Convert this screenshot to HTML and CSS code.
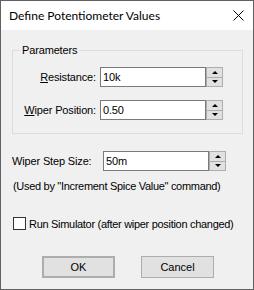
FILE: index.html
```html
<!DOCTYPE html>
<html>
<head>
  <meta charset="utf-8">
  <link rel="stylesheet" href="styles.css">
</head>
<body>
  <div class="dialog">
    <div class="titlebar">
      <span class="title">Define Potentiometer Values</span>
      <svg class="close" width="11" height="11" viewBox="0 0 11 11">
        <path d="M0.5 0.5 L10.5 10.5 M10.5 0.5 L0.5 10.5" stroke="#000" stroke-width="1" fill="none"/>
      </svg>
    </div>

    <div class="content">
      <fieldset class="group">
        <legend>Parameters</legend>
        <div class="row">
          <span class="label"><u>R</u>esistance:</span>
          <div class="spin">
            <span class="field">10k</span>
            <span class="arrows"><span class="up"></span><span class="down"></span></span>
          </div>
        </div>
        <div class="row">
          <span class="label"><u>W</u>iper Position:</span>
          <div class="spin">
            <span class="field">0.50</span>
            <span class="arrows"><span class="up"></span><span class="down"></span></span>
          </div>
        </div>
      </fieldset>

      <div class="row step">
        <span class="label left">Wiper Step Size:</span>
        <div class="spin">
          <span class="field">50m</span>
          <span class="arrows"><span class="up"></span><span class="down"></span></span>
        </div>
      </div>
      <p class="note">(Used by "Increment Spice Value" command)</p>

      <label class="check"><span class="box"></span>Run Simulator (after wiper position changed)</label>

      <div class="buttons">
        <button class="btn default">OK</button>
        <button class="btn">Cancel</button>
      </div>
    </div>
  </div>
</body>
</html>
```

FILE: styles.css
```css
html, body {margin: 0; padding: 0;}
body {font-family: "Liberation Sans", Arial, sans-serif; font-size: 11px; color: #000;}

.dialog {width: 254px; height: 290px; box-sizing: border-box; border: 1px solid #616161; background: #f0f0f0; display: flex; flex-direction: column; overflow: hidden;}

.titlebar {height: 29px; background: #fff; display: flex; align-items: center; justify-content: space-between; padding: 0 9px 0 8px; flex: none;}
.title {font-family: Lato, "Noto Sans", sans-serif; font-size: 12px;}
.close {display: block;}

.content {padding: 14px 10px 0 11px; display: flex; flex-direction: column; letter-spacing: -0.15px;}

.group {margin: 0; padding: 11px 0 13px 0; border: 1px solid #dcdcdc; width: 229px; display: flex; flex-direction: column; gap: 13px;}
.group legend {margin-left: 7px; padding: 0 2px; font-size: 11px;}

.row {display: grid; grid-template-columns: 83px 123px; column-gap: 4px; align-items: center;}
.label {text-align: right;}
.label.left {text-align: left;}
.step {margin-top: 17px; grid-template-columns: 87px 123px;}

.spin {display: flex; height: 20px;}
.field {flex: 1; box-sizing: border-box; border: 1px solid #7a7a7a; background: #fff; padding: 0 2px; line-height: 18px;}
.arrows {width: 17px; box-sizing: border-box; border: 1px solid #adadad; background: #e1e1e1; display: flex; flex-direction: column;}
.arrows span {flex: 1; display: flex; align-items: center; justify-content: center;}
.arrows .up {border-bottom: 1px solid #adadad;}
.up::before {content: ""; border-left: 3px solid transparent; border-right: 3px solid transparent; border-bottom: 3px solid #000;}
.down::before {content: ""; border-left: 3px solid transparent; border-right: 3px solid transparent; border-top: 3px solid #000;}

.note {margin: 9px 0 0 1px; white-space: nowrap; letter-spacing: -0.3px;}

.check {margin-top: 25px; display: flex; align-items: center; gap: 3px; padding-left: 1px; white-space: nowrap; letter-spacing: -0.3px;}
.box {width: 11px; height: 11px; flex: none; border: 1px solid #333; background: #fff;}

.buttons {margin-top: 26px; display: flex; gap: 26px; padding-left: 30px;}
.btn {width: 73px; height: 22px; box-sizing: border-box; border: 1px solid #adadad; background: #e1e1e1; font-family: "Liberation Sans", Arial, sans-serif; font-size: 11px; color: #000; padding: 0;}
.btn.default {border: 2px solid #adadad;}
```
